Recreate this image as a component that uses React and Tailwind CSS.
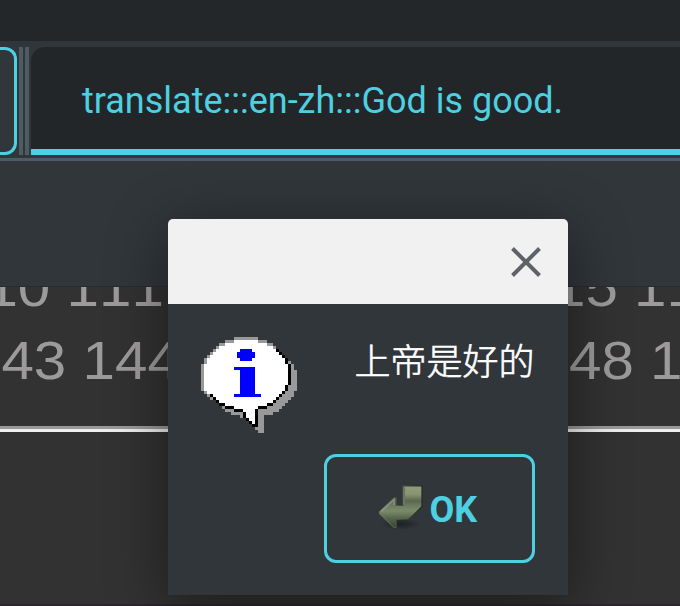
import React from "react";

// Runs of the speech bubble: [row, first column, last column, left grey cells, right grey cells, left black cells, right black cells]
const bubble = [
  [0, 11, 18, 8, 0, 0, 0],
  [1, 8, 21, 3, 3, 0, 0],
  [2, 6, 23, 2, 2, 0, 0],
  [3, 5, 24, 1, 1, 0, 0],
  [4, 4, 25, 1, 0, 0, 1],
  [5, 3, 26, 1, 0, 0, 1],
  [6, 2, 27, 1, 0, 0, 1],
  [7, 1, 28, 1, 0, 0, 1],
  [8, 1, 28, 1, 0, 0, 1],
  [9, 0, 29, 1, 0, 0, 1],
  [10, 0, 29, 1, 0, 0, 1],
  [11, 0, 29, 1, 0, 0, 1],
  [12, 0, 29, 1, 0, 0, 1],
  [13, 0, 29, 1, 0, 0, 1],
  [14, 0, 29, 1, 0, 0, 1],
  [15, 0, 29, 1, 0, 0, 1],
  [16, 0, 28, 1, 0, 0, 1],
  [17, 0, 28, 1, 0, 0, 1],
  [18, 1, 27, 1, 0, 0, 1],
  [19, 3, 26, 0, 0, 1, 1],
  [20, 4, 25, 0, 0, 1, 1],
  [21, 5, 24, 0, 0, 1, 1],
  [22, 6, 23, 0, 0, 2, 2],
  [23, 8, 21, 0, 0, 3, 3],
  [24, 11, 18, 0, 0, 3, 1],
  [25, 14, 18, 0, 0, 1, 1],
  [26, 14, 18, 0, 0, 1, 1],
  [27, 15, 18, 0, 0, 1, 1],
  [28, 16, 18, 0, 0, 1, 1],
  [29, 17, 18, 0, 0, 2, 0],
];

function InfoIcon() {
  return (
    <svg viewBox="0 0 32 32" className="h-24 w-24 shrink-0" shapeRendering="crispEdges">
      {bubble.map(([y, a, b]) => (
        <rect key={y} x={a + 2} y={y + 2} width={b - a + 1} height="1" fill="#999" />
      ))}
      {bubble.map(([y, a, b, gl, gr, kl, kr]) => (
        <g key={y}>
          <rect x={a} y={y} width={b - a + 1} height="1" fill="#fff" />
          <rect x={a} y={y} width={gl} height="1" fill="#999" />
          <rect x={b + 1 - gr} y={y} width={gr} height="1" fill="#999" />
          <rect x={a} y={y} width={kl} height="1" fill="#000" />
          <rect x={b + 1 - kr} y={y} width={kr} height="1" fill="#000" />
        </g>
      ))}
      <path
        fill="#00f"
        d="M13 4h4v1h1v2h-1v1h-4v-1h-1v-2h1zM11 10h7v9h2v1h-9v-1h2v-8h-2z"
      />
    </svg>
  );
}

function ReturnIcon() {
  return (
    <svg viewBox="0 0 48 48" className="h-12 w-12 shrink-0">
      <defs>
        <linearGradient id="stem" x1="0" y1="0" x2="0" y2="1">
          <stop offset="0" stopColor="#8f9c7c" />
          <stop offset="0.2" stopColor="#87956f" />
          <stop offset="0.36" stopColor="#5a6650" />
          <stop offset="0.48" stopColor="#6e7d60" />
          <stop offset="0.6" stopColor="#7b8b69" />
          <stop offset="0.78" stopColor="#56654a" />
          <stop offset="1" stopColor="#34442a" />
        </linearGradient>
        <linearGradient id="edge" x1="0" y1="0" x2="1" y2="0">
          <stop offset="0" stopColor="#6c7864" />
          <stop offset="0.5" stopColor="#45513b" />
          <stop offset="1" stopColor="#20271d" />
        </linearGradient>
        <radialGradient id="shade">
          <stop offset="0" stopColor="#15191a" stopOpacity="0.7" />
          <stop offset="1" stopColor="#15191a" stopOpacity="0" />
        </radialGradient>
      </defs>
      <ellipse cx="26" cy="39" rx="20" ry="6" fill="url(#shade)" />
      <path
        d="M28 1H47V21.500L42 26.500L37.500 31L33 34.500H21V42.500H19L4.500 28.500V27L19 13H21V20.500H28Z"
        fill="url(#stem)"
        stroke="url(#edge)"
        strokeWidth="1.2"
      />
      <path d="M6 26.500L19 14.500V20" fill="none" stroke="#a3ae9c" strokeWidth="1.500" opacity=".6" />
      <path d="M29 2v18" stroke="#6a7661" strokeWidth="2.200" />
    </svg>
  );
}

const digits =
  "origin-bottom-left scale-x-[1.08] whitespace-pre font-['Liberation_Sans',sans-serif] text-[54px] leading-[73px] text-[#9c9a9b] [font-kerning:none]";

function Background() {
  return (
    <div className="flex h-[606px] w-[680px] flex-col overflow-hidden bg-[#323232]">
      <div className="h-[41px] shrink-0 bg-[#232729]" />
      <div className="flex h-[117px] shrink-0 bg-[#31363b] pt-1.5">
        <div className="h-[108px] w-[17px] rounded-r-[12px] border-y-[3px] border-r-[3px] border-[#4dd0e1]" />
        <div className="ml-[2px] h-[108px] w-1 bg-[#4f5b62]" />
        <div className="ml-[2px] h-[108px] w-1 bg-[#4f5b62]" />
        <div className="ml-[2px] flex h-[108px] flex-1 flex-col overflow-hidden rounded-tl-[14px] bg-[#232629]">
          <div className="flex h-[102px] items-center pl-[51px] font-[Roboto,sans-serif] text-[36px] leading-none whitespace-pre text-[#4dd0e1]">
            <span className="pt-1.5">translate:::en-zh:::God is good.</span>
          </div>
          <div className="h-1.5 bg-[#4dd0e1]" />
        </div>
      </div>
      <div className="h-[3px] shrink-0 bg-[#4f5b62]" />
      <div className="h-[126px] shrink-0 border-b border-[#292c2e] bg-[#31363b]" />
      <div className="h-[139px] shrink-0 overflow-hidden">
        <div className="-mt-[36px]">
          <div className={"-ml-[47px] " + digits}>110 111 112 113 114 115 116</div>
          <div className={"-ml-[31px] " + digits}>143 144 145 146 147 148 149</div>
        </div>
      </div>
      <div className="h-[3px] shrink-0 bg-[#999]" />
      <div className="h-[3px] shrink-0 bg-[#eee]" />
      <div className="flex-1" />
      <div className="h-0.5 shrink-0 bg-[#2c272b]" />
    </div>
  );
}

export default function App() {
  return (
    <div className="relative h-[606px] w-[680px] overflow-hidden">
      <Background />
      <div
        role="dialog"
        className="absolute top-[219px] left-[168px] flex h-[376px] w-[400px] flex-col rounded-t-[5px] bg-[#31363b] shadow-[0_12px_60px_rgba(0,0,0,0.45)]"
      >
        <div className="flex h-[85px] items-center justify-end rounded-t-[5px] bg-[#f1f1f1] pr-[27px]">
          <svg viewBox="0 0 30 30" className="h-[30px] w-[30px]" stroke="#5f6368" strokeWidth="4">
            <path d="M1.500 1.500l27 27M28.500 1.500l-27 27" />
          </svg>
        </div>
        <div className="flex justify-between pt-[33px] pr-[33.5px] pl-[33px]">
          <InfoIcon />
          <span className="pt-1 font-['Noto_Sans_CJK_SC',sans-serif] text-[36px] leading-[36px] font-light text-white [-webkit-text-stroke:0.6px_white]">
            上帝是好的
          </span>
        </div>
        <div className="mt-[21px] mr-[33px] flex h-[109px] w-[211px] items-center self-end rounded-[12px] border-[3px] border-[#4dd0e1] pl-[48px]">
          <ReturnIcon />
          <span className="ml-[6.5px] pt-[3px] font-[Roboto,sans-serif] text-[36px] leading-none font-bold text-[#4dd0e1]">
            OK
          </span>
        </div>
      </div>
    </div>
  );
}
